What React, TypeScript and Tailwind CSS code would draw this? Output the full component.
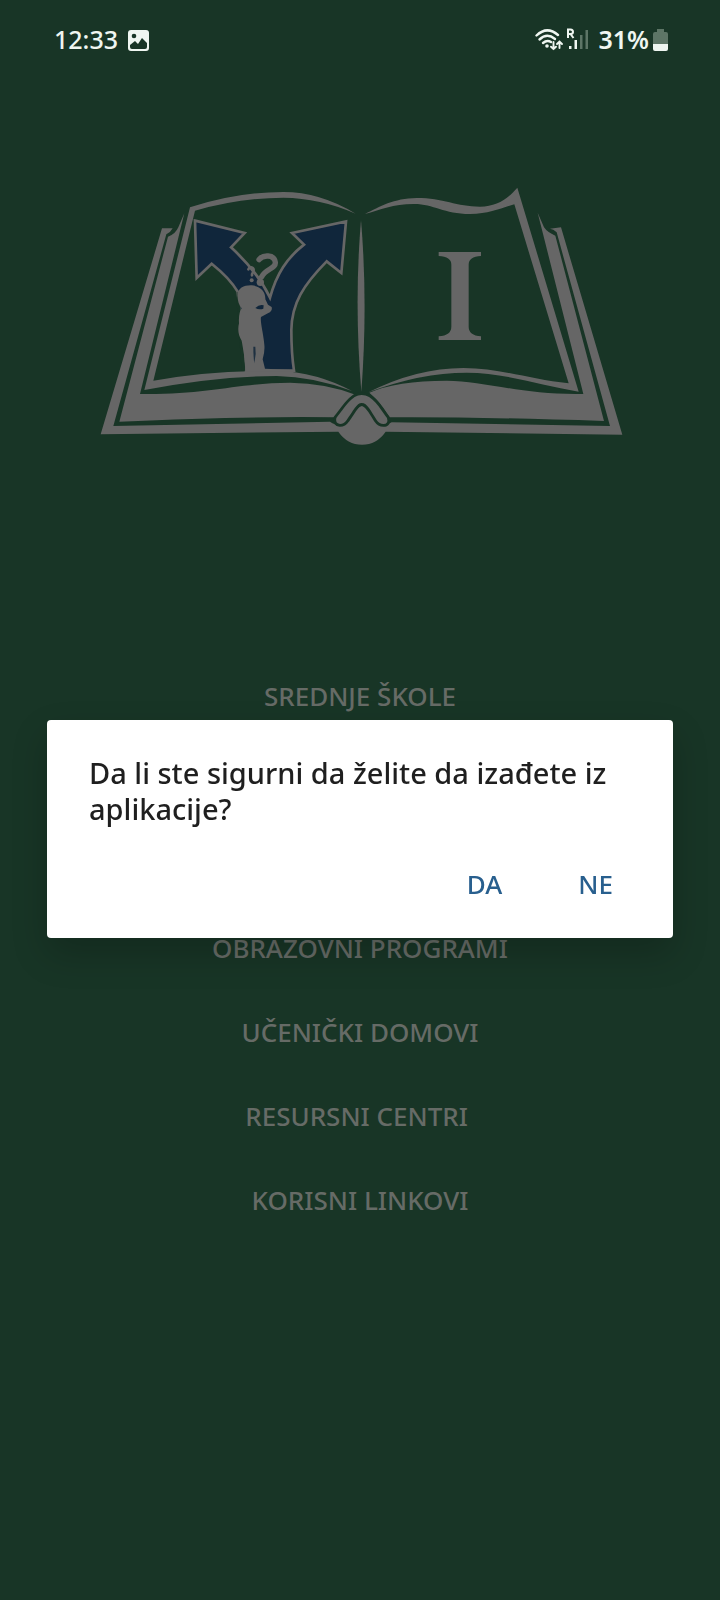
import React from "react";

function BookLogo() {
  return (
    <svg viewBox="0 0 1620 870" className="w-3/4" role="img" aria-label="Upis book logo">
      <g fill="#666666">
        {/* cover and spine */}
        <path d="M216 175L248 175Q242 187 229 193L70 768L720 755Q738 768 762 764C780 750 796 710 816 708C836 710 852 750 872 764Q890 768 905 757L1560 768L1400 187Q1390 177 1380 176L1413 172L1597 794L887 785Q860 824 816 824Q772 824 745 785L32 793Z" />
        {/* page blocks */}
        <path d="M283 130L150 672C350 675 450 638 600 638Q710 640 792 673Q765 695 736 742Q480 738 88 755L234 200Q256 193 265 172Z" />
        <path d="M1343 128L1480 672C1300 676 1180 632 1070 632Q920 632 838 668Q865 690 898 742Q1150 740 1542 753L1396 197Q1372 187 1362 172Z" />
        {/* open pages */}
        <path d="M300 112Q440 66 580 66Q690 66 797 131Q690 84 580 83Q450 84 315 122L190 632Q350 602 560 602Q680 606 786 663Q670 620 560 618Q380 618 163 660Z" />
        <path d="M825 132C870 110 910 85 980 84C1060 84 1100 110 1170 110C1220 108 1250 90 1282 53L1466 665C1350 645 1240 608 1130 608Q990 608 835 667Q980 594 1120 594C1230 594 1320 628 1436 640L1273 103C1230 115 1200 132 1140 132C1060 132 1030 101 970 102C910 102 870 120 825 132Z" />
        <path d="M813 150Q834 400 814 665Q792 400 813 150Z" />
      </g>
      {/* ribbon over the spine */}
      <path
        d="M739 744C765 712 785 675 815 675C847 675 868 712 891 744Q896 762 880 762Q868 762 860 750C842 722 832 699 815 699C800 699 790 722 770 750Q762 762 750 762Q735 760 739 744Z"
        fill="#666666"
        stroke="#183526"
        strokeWidth="17"
        strokeLinejoin="round"
        paintOrder="stroke"
      />
      {/* forked arrow */}
      <path
        d="M315 152L464 189L423 232C470 275 510 320 540 383C560 310 590 265 642 224L606 189L768 154L754 309L710 274C640 345 605 400 604 480Q604 550 612 602L468 602L443 365Q420 325 365 281L320 324Z"
        fill="#10263b"
        stroke="#666666"
        strokeWidth="8"
      />
      <path d="M466 602L448 370L443 365L440 400L455 602Z" fill="#183526" />
      {/* thinking figure */}
      <path
        d="M443 380C440 355 462 345 485 346C512 348 527 365 526 388L534 404L545 411Q548 423 535 429L513 441C510 455 520 490 523 524Q525 545 518 568L525 596L612 600L612 605L466 605C466 570 459 535 455 512C444 495 443 475 447 460Q445 430 455 415Q443 400 443 380Z"
        fill="#666666"
      />
      <path d="M496 414Q508 402 521 406L520 416Q507 421 496 414Z" fill="#10263b" />
      <path d="M490 530L496 530L497 552L493 580Q490 560 490 530Z" fill="#1e3040" />
      {/* question marks */}
      <g fill="none" stroke="#666666" strokeLinecap="round">
        <path d="M507 269C518 254 553 252 556 277C558 296 528 295 515 320" strokeWidth="16" />
        <path d="M475 298C478 289 490 291 491 300C492 308 484 309 486 316" strokeWidth="8" />
      </g>
      <circle cx="511" cy="337" r="11" fill="#666666" />
      <circle cx="485" cy="331" r="6" fill="#666666" />
      {/* roman numeral on the right page */}
      <path d="M1046 246H1173V258Q1136 260 1136 284V470Q1136 496 1173 499V510H1046V499Q1084 496 1084 470V284Q1084 260 1046 258Z" fill="#666666" />
    </svg>
  );
}

function StatusBar() {
  return (
    <header className="flex h-20 items-center justify-between pr-[52px] pl-[54px] text-[25px] font-semibold text-[#eff6f1]">
      <div className="flex items-center gap-2.5">
        <time className="font-medium">12:33</time>
        <svg viewBox="0 0 21 21" className="h-[21px] w-[21px]" aria-hidden="true">
          <rect width="21" height="21" rx="3" fill="currentColor" />
          <circle cx="6" cy="6" r="2.3" fill="#183526" />
          <path d="M2 17V15L7 11L10 14L14 8L19 13V17Q19 19 17 19H4Q2 19 2 17Z" fill="#183526" />
        </svg>
      </div>
      <div className="flex items-center">
        <svg viewBox="0 0 54 24" className="mr-2.5 h-6 w-[54px]" aria-hidden="true">
          <g fill="none" stroke="currentColor" strokeWidth="2.4" strokeLinecap="round">
            <path d="M1.500 7.500Q12 -2.500 23 7" />
            <path d="M4.500 11.500Q12 4.500 20 11" />
            <path d="M8 15Q12 11.500 16 14" />
            <path d="M18.500 14V21M16 18.700L18.500 21L21 18.700M24.500 20V13.500M22 16L24.500 13.500L27 16" strokeWidth="1.900" />
          </g>
          <circle cx="12" cy="18" r="1.800" fill="currentColor" />
          <path d="M33 10V1.500H35.500Q38 1.500 38 4Q38 6 35.500 6H33M35.500 6L38.500 10" fill="none" stroke="currentColor" strokeWidth="2" />
          <path d="M34 18H36.500V21H34ZM39.500 12H42V21H39.500Z" fill="currentColor" />
          <path d="M45 7H47.500V21H45ZM50.500 2H53V21H50.500Z" fill="#5d7566" />
        </svg>
        <span>31%</span>
        <svg viewBox="0 0 15 22" className="ml-1 h-[22px] w-[15px]" aria-hidden="true">
          <path d="M4 0H11V3H13Q15 3 15 5V16H0V5Q0 3 2 3H4Z" fill="#5d7566" />
          <path d="M0 15H15V20Q15 22 13 22H2Q0 22 0 20Z" fill="currentColor" />
        </svg>
      </div>
    </header>
  );
}

const links = ["OBRAZOVNI PROGRAMI", "UČENIČKI DOMOVI", "RESURSNI CENTRI ", "KORISNI LINKOVI"];

function MenuLink({ label }: { label: string }) {
  return (
    <a href="#" className="flex h-[84px] items-center whitespace-pre">
      {label}
    </a>
  );
}

export default function App() {
  return (
    <div className="min-h-screen bg-[#183526] font-['Noto_Sans',sans-serif]">
      <StatusBar />
      <main className="flex flex-col items-center pt-[90px]">
        <BookLogo />
        <nav className="mt-[194px] flex flex-col items-center text-[26px] font-medium text-[#666b66]">
          <div className="mb-[168px]">
            <MenuLink label="SREDNJE ŠKOLE" />
          </div>
          {links.map((label) => (
            <MenuLink key={label} label={label} />
          ))}
        </nav>
      </main>
      <div className="fixed inset-0 flex items-center px-[47px] pt-[57px]">
        <section
          role="alertdialog"
          aria-labelledby="exit-title"
          className="w-full rounded bg-white px-[42px] pt-[35px] pb-[25px] shadow-[0_16px_36px_rgba(0,0,0,0.2)]"
        >
          <h1 id="exit-title" className="text-[29px] leading-9 font-medium text-[#1f1f1f]">
            Da li ste sigurni da želite da izađete iz aplikacije?
          </h1>
          <div className="mt-[29px] flex justify-end gap-7 text-[26px] font-medium text-[#285f8e]">
            <button type="button" className="px-6 py-3 leading-[33px]">
              DA
            </button>
            <button type="button" className="py-3 pr-[18px] pl-6 leading-[33px]">
              NE
            </button>
          </div>
        </section>
      </div>
    </div>
  );
}
